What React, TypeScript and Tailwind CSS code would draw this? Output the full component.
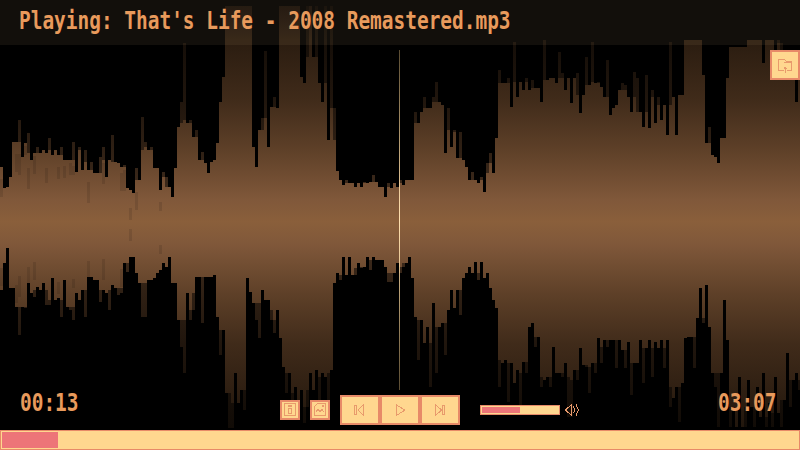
const TOP = [
380,445,440,410,305,305,240,350,310,280,360,340,322,340,330,340,295,345,330,345,322,360,360,360,305,395,322,390,330,390,
365,400,400,350,322,410,360,285,365,370,380,375,445,450,460,385,420,232,305,330,320,385,385,450,395,410,440,470,385,260,
185,10,250,240,290,270,360,335,370,400,365,360,310,185,110,0,0,0,0,0,0,0,0,0,320,380,270,235,33,320,
200,170,205,0,0,0,0,0,0,0,110,130,0,0,50,0,130,185,0,300,0,205,
393,420,435,420,430,430,440,430,440,425,430,425,405,425,440,440,470,430,445,430,440,420,435,420,420,420,
215,250,215,170,205,205,170,125,185,195,340,205,320,270,355,275,360,380,420,395,420,430,410,455,370,340,400,295,
90,130,130,115,200,5,170,125,150,115,150,
120,145,145,185,0,120,115,115,130,35,100,150,115,190,115,100,220,165,50,135,5,130,125,140,170,60,225,205,195,150,130,135,170,215,95,115,215,260,105,265,150,250,170,240,195,285,5,170,285,165,165,
0,0,0,0,0,0,105,310,260,345,350,370,295,295,115,20,20,20,20,20,20,0,0,0,0,0,70,0,0,0,50,0,10,60,110,100,100,185,90,120,
];
const BOTTOM = [
750,670,625,745,745,800,885,800,805,730,760,770,740,750,730,795,795,715,780,775,830,720,800,810,840,760,780,750,830,710,
710,720,720,785,750,760,810,735,745,765,760,670,695,650,650,700,730,830,830,720,720,715,700,690,670,680,650,730,730,840,
920,1000,760,840,810,710,710,850,710,710,710,705,830,945,870,1060,1165,1165,1000,1090,1050,1110,715,755,790,840,895,750,780,780,
840,880,810,895,980,1060,1000,1100,1040,1100,1050,1150,1100,1000,1050,990,1130,1000,1010,1140,990,730,
700,720,650,705,650,705,705,670,685,680,650,690,650,660,660,660,680,725,725,700,670,700,680,670,650,715,
830,960,840,910,860,1040,790,1000,860,850,945,810,750,805,750,825,715,700,680,700,665,720,665,715,700,745,780,805,
1040,970,960,1085,970,1030,990,1095,965,1000,860,
850,920,890,1040,1020,1010,1040,920,1000,1000,1010,970,1130,1130,990,1020,925,975,980,1060,970,1000,895,970,900,920,900,900,985,900,930,985,905,1065,970,970,900,1030,925,900,1010,905,925,900,985,900,1100,1075,1040,1145,1030,
895,890,890,985,835,745,850,735,860,1000,1040,1160,1000,780,900,1160,1100,1160,1010,1160,1160,1020,1100,1160,1040,1130,1000,1160,1090,1160,1010,1120,1160,1080,940,1100,1020,1000,1050,1010,
];

const yOf = (z: number, i: number) => (z === 0 ? (i < 120 ? 6 : 40) : 40 + z / 3);
const med = (a: number[], i: number) =>
  [a[i - 2] ?? a[i], a[i - 1] ?? a[i], a[i], a[i + 1] ?? a[i], a[i + 2] ?? a[i]].sort((p, q) => p - q)[2];
const N = Math.min(267, TOP.length, BOTTOM.length);
let outer = "";
let inner = "";
let streaks = "";
let seed = 7;
const rnd = () => {
  seed = (seed * 1103515 + 12345) % 2147483648;
  return seed / 2147483648;
};
for (let i = 0; i < N; i++) {
  const x = i * 3;
  const t = Math.round(yOf(TOP[i], i));
  const b = Math.round(40 + BOTTOM[i] / 3);
  const it = Math.max(t, Math.round(yOf(med(TOP, i), i)));
  const ib = Math.min(b, Math.round(40 + med(BOTTOM, i) / 3));
  outer += `M${x} ${t}h3V${b}h-3z`;
  inner += `M${x} ${it}h3V${ib}h-3z`;
  if (i < 58 && rnd() < 0.3) {
    const h = 9 + Math.floor(rnd() * 5) * 3;
    const y = it + 3 + Math.floor(rnd() * 6) * 3;
    streaks += `M${x} ${y}h3v${h}h-3z`;
    if (rnd() < 0.5) {
      const y2 = ib - 16 - Math.floor(rnd() * 6) * 3;
      streaks += `M${x} ${y2}h3v${h}h-3z`;
    }
  }
}

const C = "#e89a6c";

function Wave() {
  return (
    <svg className="absolute inset-0" width={800} height={450} viewBox="0 0 800 450" shapeRendering="crispEdges">
      <defs>
        <linearGradient id="wg" gradientUnits="userSpaceOnUse" x1="0" y1="0" x2="0" y2="450">
          <stop offset="0" stopColor="#120b06" />
          <stop offset="0.089" stopColor="#2a1c10" />
          <stop offset="0.222" stopColor="#402b1a" />
          <stop offset="0.333" stopColor="#5e4028" />
          <stop offset="0.444" stopColor="#80583a" />
          <stop offset="0.493" stopColor="#8a5f3b" />
          <stop offset="0.542" stopColor="#80583a" />
          <stop offset="0.653" stopColor="#5e4028" />
          <stop offset="0.764" stopColor="#402b1a" />
          <stop offset="0.898" stopColor="#2a1c10" />
          <stop offset="1" stopColor="#1a1109" />
        </linearGradient>
        <linearGradient id="ph" gradientUnits="userSpaceOnUse" x1="0" y1="50" x2="0" y2="390">
          <stop offset="0" stopColor="#ffd78f" stopOpacity="0.35" />
          <stop offset="0.5" stopColor="#ffe0b0" stopOpacity="1" />
          <stop offset="1" stopColor="#ffd78f" stopOpacity="0.35" />
        </linearGradient>
      </defs>
      <path d={outer} fill="url(#wg)" opacity={0.5} />
      <path d={inner} fill="url(#wg)" />
      <path d={streaks} fill="#000" opacity={0.1} />
      <rect x={399} y={50} width={1} height={340} fill="url(#ph)" />
    </svg>
  );
}

function Pixel({ size, children }: { size: number; children: React.ReactNode }) {
  return (
    <svg width={size} height={size} viewBox={`0 0 ${size} ${size}`} fill="none" stroke={C} strokeWidth={1} shapeRendering="crispEdges">
      {children}
    </svg>
  );
}

function IconBtn({ className, children }: { className: string; children: React.ReactNode }) {
  return (
    <div className={`flex items-center justify-center border-2 border-[#e78a68] bg-[#ffd78f] ${className}`}>
      {children}
    </div>
  );
}

function Time({ children }: { children: string }) {
  return (
    <span className="inline-block w-[60px] origin-left scale-x-[0.81] whitespace-nowrap text-[24px] font-bold leading-[24px] text-[#e89a5c] [font-family:'DejaVu_Sans_Mono',monospace]">
      {children}
    </span>
  );
}

export default function App() {
  return (
    <div className="relative flex h-[450px] w-[800px] flex-col overflow-hidden bg-black">
      <Wave />
      <div className="relative flex h-[45px] items-center bg-[#ffd8a0]/[0.07] pl-[19px] pb-[3px]">
        <span className="origin-left scale-x-[0.81] whitespace-nowrap text-[24px] font-bold leading-[24px] text-[#e89a5c] [font-family:'DejaVu_Sans_Mono',monospace]">
          Playing: That's Life - 2008 Remastered.mp3
        </span>
      </div>
      <div className="relative mt-[5px] flex justify-end">
        <IconBtn className="h-[30px] w-[30px]">
          <Pixel size={16}>
            <path d="M1.5 13.5V2.5H7.5L9.5 4.5H14.5V13.5H9.5M6.5 13.5H1.5M6.5 5.5H14.5" />
            <path d="M8 15.5V10.5M6.5 11.5H7.5V10.5H8.5V11.5H9.5" />
          </Pixel>
        </IconBtn>
      </div>
      <div className="flex-1" />
      <div className="relative flex h-[40px] items-start pl-[20px] pr-[22px]">
        <div className="mt-px w-[60px]"><Time>00:13</Time></div>
        <div className="ml-[200px] mt-[5px] flex items-center">
          <IconBtn className="h-[20px] w-[20px]">
            <Pixel size={14}>
              <rect x={1.5} y={0.5} width={11} height={12} />
              <path d="M5.5 5.5H8.5V10.5H5.5ZM5.5 2.5H8.5V3.5H5.5Z" />
            </Pixel>
          </IconBtn>
          <IconBtn className="ml-[10px] h-[20px] w-[20px]">
            <Pixel size={14}>
              <path d="M4.5 0.5H12.5V12.5H1.5V3.5Z" />
              <path d="M9.5 2.5H10.5V3.5H9.5Z" />
              <path d="M2.5 9.5L5 6.5L7 8.5L9 6.5L11.5 9.5" />
            </Pixel>
          </IconBtn>
          <IconBtn className="ml-[10px] h-[30px] w-[40px]">
            <Pixel size={14}>
              <path d="M1.5 2.5H3.5V11.5H1.5ZM10.5 1.5V12.5L5 7Z" />
            </Pixel>
          </IconBtn>
          <IconBtn className="h-[30px] w-[40px]">
            <Pixel size={14}>
              <path d="M3.5 2V12.5L12 7Z" />
            </Pixel>
          </IconBtn>
          <IconBtn className="h-[30px] w-[40px]">
            <Pixel size={14}>
              <path d="M2.5 1.5V12.5L8.5 7ZM9.5 2.5H11.5V11.5H9.5Z" />
            </Pixel>
          </IconBtn>
          <div className="ml-[20px] h-[10px] w-[80px] border border-[#e78a68] bg-[#ffd78f] p-px">
            <div className="h-full w-[38px] bg-[#ed7578]" />
          </div>
          <div className="ml-[4px] flex h-[16px] w-[16px] items-center">
            <svg width={16} height={16} viewBox="0 0 16 16" fill="none" stroke={C} strokeWidth={1} shapeRendering="crispEdges">
              <path d="M1.5 8L7.5 2.5V13.5Z" />
              <path d="M9.5 4.5L11 8L9.5 11.5M12 2.5L14.5 8L12 13.5" />
            </svg>
          </div>
        </div>
        <div className="ml-auto mt-px w-[60px]"><Time>03:07</Time></div>
      </div>
      <div className="relative h-[20px] w-full border border-[#e78a68] bg-[#ffd78f] p-px">
        <div className="h-full w-[56px] bg-[#ed7578]" />
      </div>
    </div>
  );
}
